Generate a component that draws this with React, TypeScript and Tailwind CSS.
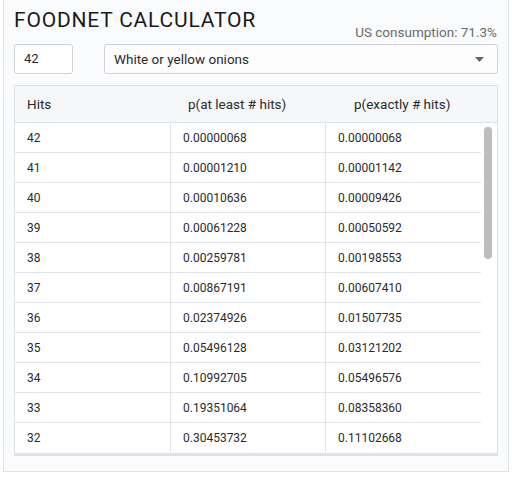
const rows: [string, string, string][] = [
  ["42", "0.00000068", "0.00000068"],
  ["41", "0.00001210", "0.00001142"],
  ["40", "0.00010636", "0.00009426"],
  ["39", "0.00061228", "0.00050592"],
  ["38", "0.00259781", "0.00198553"],
  ["37", "0.00867191", "0.00607410"],
  ["36", "0.02374926", "0.01507735"],
  ["35", "0.05496128", "0.03121202"],
  ["34", "0.10992705", "0.05496576"],
  ["33", "0.19351064", "0.08358360"],
  ["32", "0.30453732", "0.11102668"],
];

export default function App() {
  return (
    <div className="w-[512px] h-[477px] bg-white font-['Roboto',sans-serif] text-[#2b2b2b]">
      <div className="ml-[3px] w-[506px] h-[472px] border-x border-b border-[#dfe2e6] bg-[#fafbfc] px-[10px]">
        <div className="flex items-end justify-between h-[39px]">
          <h1 className="text-[21px] leading-[28px] mb-[5px] tracking-[0.8px] font-normal text-[#1a1a1a]">
            FOODNET CALCULATOR
          </h1>
          <span className="text-[13.5px] leading-[16px] text-[#6b6b6b] mb-[-1px] mr-[1px]">
            US consumption: 71.3%
          </span>
        </div>
        <div className="flex mt-[5px] gap-[31px]">
          <div className="w-[59px] h-[30px] border border-[#cfd3d8] rounded-[3px] bg-white flex items-center px-[9px] text-[13px]">
            42
          </div>
          <div className="flex-1 h-[30px] border border-[#cfd3d8] rounded-[3px] bg-[#fdfdfd] flex items-center justify-between pl-[9px] pr-[13px] text-[13.5px]">
            <span>White or yellow onions</span>
            <svg width="9" height="5" viewBox="0 0 9 5">
              <path d="M0 0H9L4.5 5Z" fill="#5f656d" />
            </svg>
          </div>
        </div>
        <div className="mt-[11px] border border-[#dde1e6] border-b-[3px] border-b-[#dfe3e8] bg-white">
          <div className="flex h-[37px] items-center bg-[#f5f7f9] border-b border-[#dfe3e8] text-[13.5px]">
            <div className="w-[173px] pl-[12px]">Hits</div>
            <div className="w-[166px]">p(at least # hits)</div>
            <div>p(exactly # hits)</div>
          </div>
          <div className="flex">
            <div className="w-[466px] text-[12px]">
              {rows.map((r, i) => (
                <div
                  key={r[0]}
                  className={
                    "flex h-[30px] items-center " +
                    (i < rows.length - 1 ? "border-b border-[#e2e5e9]" : "")
                  }
                >
                  <div className="w-[156px] h-full flex items-center pl-[12px] border-r border-[#e2e5e9]">{r[0]}</div>
                  <div className="w-[155px] h-full flex items-center pl-[12px] border-r border-[#e2e5e9]">{r[1]}</div>
                  <div className="flex-1 h-full flex items-center pl-[12px]">{r[2]}</div>
                </div>
              ))}
            </div>
            <div className="flex-1 relative">
              <div className="absolute left-[3px] top-[4px] w-[8px] h-[132px] rounded-full bg-[#bdbdbd]" />
            </div>
          </div>
        </div>
      </div>
    </div>
  );
}
